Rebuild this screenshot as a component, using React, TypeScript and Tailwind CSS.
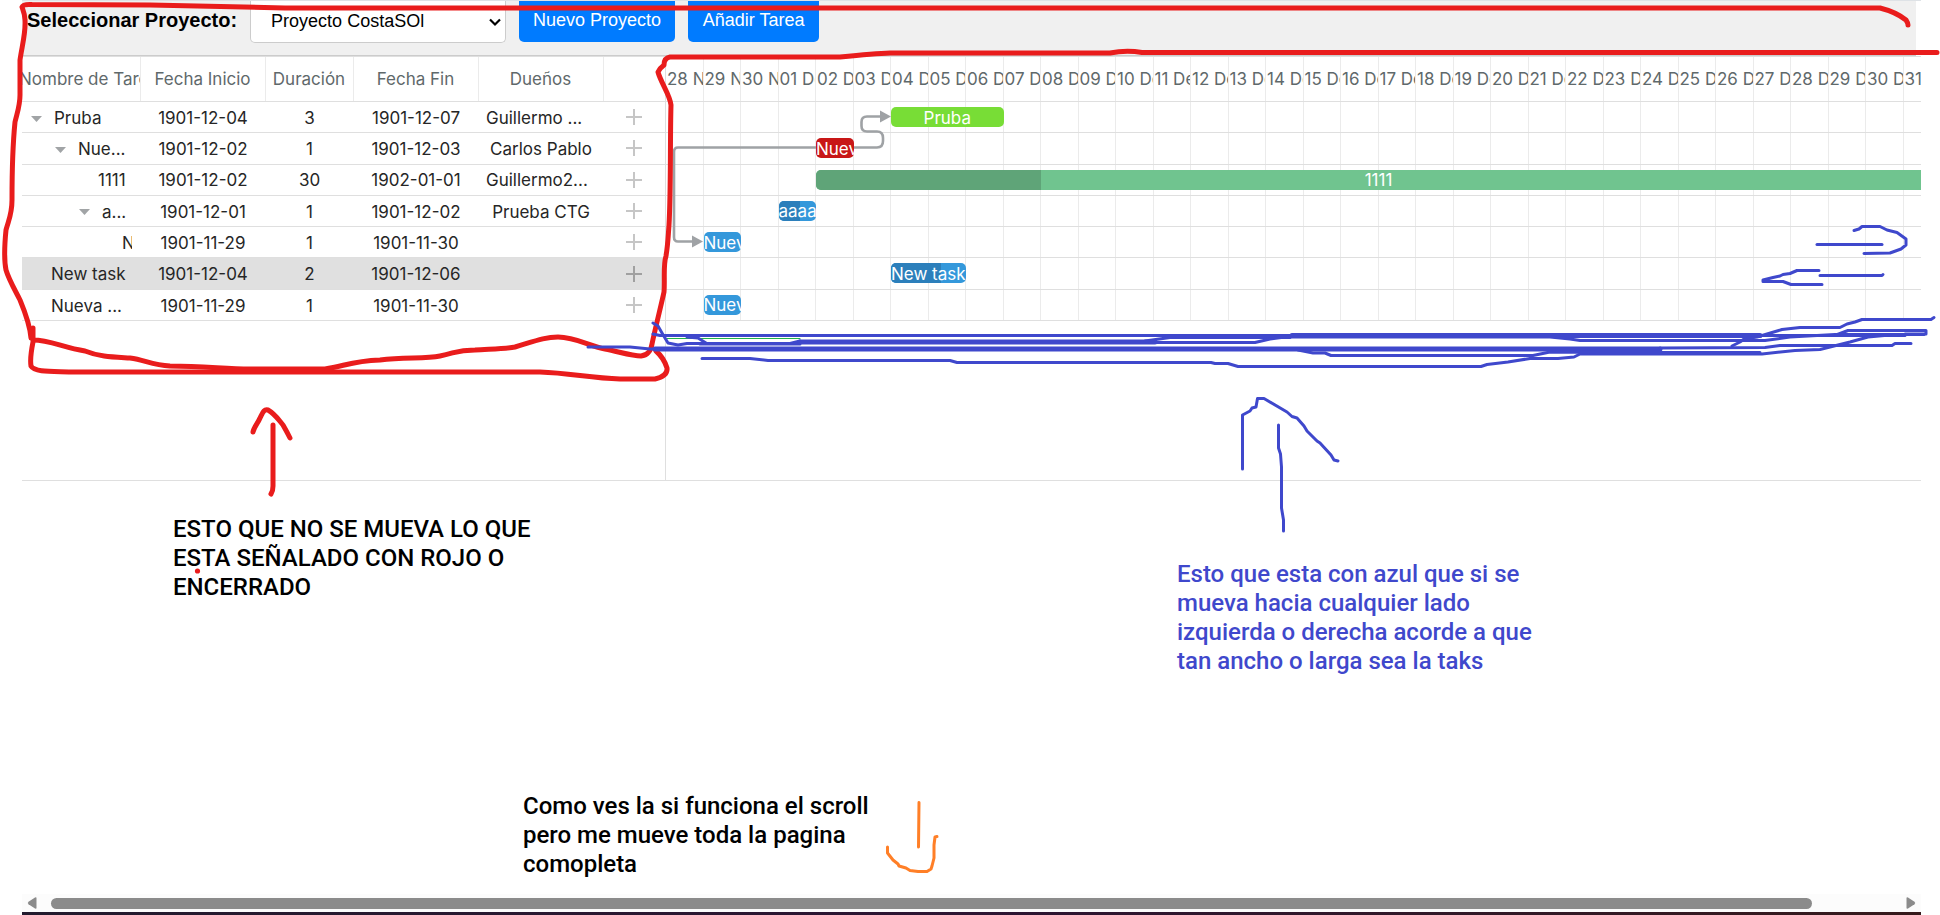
type Row = {
  name: string;
  pad: string;
  arrow?: boolean;
  start: string;
  days: string;
  end: string;
  owner?: string;
  cut?: boolean;
  selected?: boolean;
  bar: { span: string; color: string; label: string; fit?: boolean; done?: string; doneColor?: string };
};

const BLUE = 'bg-[#3498db]';
const BLUE_DONE = 'bg-[#2c7fbb]';

const rows: Row[] = [
  { name: 'Pruba', pad: 'pl-[9px]', arrow: true, start: '1901-12-04', days: '3', end: '1901-12-07', owner: 'Guillermo ...', cut: true,
    bar: { span: 'col-start-7 col-span-3', color: 'bg-[#78dd36]', label: 'Pruba', fit: true } },
  { name: 'Nue...', pad: 'pl-[33px]', arrow: true, start: '1901-12-02', days: '1', end: '1901-12-03', owner: 'Carlos Pablo',
    bar: { span: 'col-start-5 col-span-1', color: 'bg-[#c81717]', label: 'Nueva' } },
  { name: '1111', pad: 'pl-[76px]', start: '1901-12-02', days: '30', end: '1902-01-01', owner: 'Guillermo2...', cut: true,
    bar: { span: 'col-start-5 col-span-30', color: 'bg-[#70c48f]', label: '1111', fit: true, done: 'w-1/5', doneColor: 'bg-[#5fa478]' } },
  { name: 'a...', pad: 'pl-[57px]', arrow: true, start: '1901-12-01', days: '1', end: '1901-12-02', owner: 'Prueba CTG',
    bar: { span: 'col-start-4 col-span-1', color: BLUE, label: 'aaaaa', done: 'w-[57%]', doneColor: BLUE_DONE } },
  { name: 'N', pad: 'pl-[100px]', start: '1901-11-29', days: '1', end: '1901-11-30',
    bar: { span: 'col-start-2 col-span-1', color: BLUE, label: 'Nueva' } },
  { name: 'New task', pad: 'pl-[29px]', start: '1901-12-04', days: '2', end: '1901-12-06', selected: true,
    bar: { span: 'col-start-7 col-span-2', color: BLUE, label: 'New task', done: 'w-[67%]', doneColor: BLUE_DONE } },
  { name: 'Nueva ...', pad: 'pl-[29px]', start: '1901-11-29', days: '1', end: '1901-11-30',
    bar: { span: 'col-start-2 col-span-1', color: BLUE, label: 'Nueva' } },
];

const days = Array.from({ length: 34 }, (_, i) =>
  i < 3 ? `${28 + i} Nov` : `${String(i - 2).padStart(2, '0')} Dec`,
);

const columns = ['Nombre de Tarea', 'Fecha Inicio', 'Duración', 'Fecha Fin', 'Dueños', ''];

const TABLE_COLS = 'grid grid-cols-[119px_125px_88px_125px_125px_61px]';
const DAY_COLS = 'grid grid-cols-[repeat(34,minmax(0,1fr))]';

function Toolbar() {
  return (
    <header className="mr-[5px] flex h-[55px] items-start border-b border-[#cccccc] bg-[#f0f0f0] pl-[5px] font-['Liberation_Sans',sans-serif]">
      <label htmlFor="project" className="flex h-[41px] items-center pb-[3px] text-[20px] font-bold text-black">
        Seleccionar Proyecto:
      </label>
      <div className="relative ml-[13px]">
        <select
          id="project"
          defaultValue="costa"
          className="h-[42px] w-[256px] appearance-none rounded-b-[5px] border border-t-0 border-[#cccccc] bg-white pl-5 text-[18px] text-black"
        >
          <option value="costa">Proyecto CostaSOl</option>
        </select>
        <svg className="pointer-events-none absolute top-[17px] right-[5px]" width="12" height="9" viewBox="0 0 12 9" fill="none" stroke="#000" strokeWidth="2.2">
          <path d="M1 1.5 6 6.5 11 1.5" />
        </svg>
      </div>
      <button type="button" className="ml-[13px] h-[41px] w-[156px] rounded-b-[5px] bg-[#007bff] pb-[3px] text-[18px] text-white">
        Nuevo Proyecto
      </button>
      <button type="button" className="ml-[13px] h-[41px] w-[131px] rounded-b-[5px] bg-[#007bff] pb-[3px] text-[18px] text-white">
        Añadir Tarea
      </button>
    </header>
  );
}

function TaskTable() {
  return (
    <table className="block w-[643px] shrink-0 text-[17px] text-[#262626]">
      <thead className="block">
        <tr className={`${TABLE_COLS} h-[45px] border-b border-[#dfdfdf] text-[#5f696b]`}>
          {columns.map((c, i) => (
            <th
              key={i}
              className={`flex items-center overflow-hidden pt-px font-normal whitespace-nowrap ${i === 0 ? '-indent-[3px]' : 'justify-center pr-px'} ${i < 5 ? 'border-r border-[#ebebeb]' : ''}`}
            >
              {c}
            </th>
          ))}
        </tr>
      </thead>
      <tbody className="grid h-[219px] grid-rows-7">
        {rows.map((r, i) => (
          <tr key={i} className={`${TABLE_COLS} border-b border-[#dfdfdf] ${r.selected ? 'bg-[#e0e0e0]' : ''}`}>
            <td className={`flex items-center overflow-hidden pt-[3px] whitespace-nowrap ${r.pad}`}>
              {r.arrow && (
                <svg className="mr-3 shrink-0" width="11" height="6" viewBox="0 0 11 6">
                  <path d="M0 0h11L5.5 6z" fill="#a1a4a6" />
                </svg>
              )}
              <span className={r.name === 'N' ? 'w-[10px] overflow-hidden' : ''}>{r.name}</span>
            </td>
            <td className="flex items-center justify-center pt-[3px] pr-px">{r.start}</td>
            <td className="flex items-center justify-center pt-[3px] pr-px">{r.days}</td>
            <td className="flex items-center justify-center pt-[3px] pr-px">{r.end}</td>
            <td className={`flex items-center pt-[3px] whitespace-nowrap ${r.cut ? 'pl-[7px]' : 'justify-center pr-px'}`}>{r.owner}</td>
            <td className="flex items-center justify-center pr-0.5">
              <button type="button" aria-label="+">
                <svg width="16" height="16" viewBox="0 0 16 16" stroke={r.selected ? '#a0a0a0' : '#c6c6c6'} strokeWidth="2">
                  <path d="M8 0v16M0 8h16" />
                </svg>
              </button>
            </td>
          </tr>
        ))}
      </tbody>
    </table>
  );
}

function Timeline() {
  return (
    <div className="min-w-0 flex-1 overflow-hidden border-l border-[#dfdfdf] text-[17px]">
      <div className="relative w-[1275px]">
        <div className={`${DAY_COLS} h-[45px] border-b border-[#dfdfdf] text-[#5f696b]`}>
          {days.map((d) => (
            <div key={d} className="flex items-center overflow-hidden border-r border-[#ebebeb] pt-px pl-px whitespace-nowrap">
              {d}
            </div>
          ))}
        </div>
        <div className="grid h-[219px] grid-rows-7">
          {rows.map((r, i) => (
            <div key={i} className={`${DAY_COLS} border-b border-[#dfdfdf]`}>
              <div className={`${DAY_COLS} col-span-full col-start-1 row-start-1`}>
                {days.map((d) => (
                  <div key={d} className="border-r border-[#ebebeb]" />
                ))}
              </div>
              <div className={`${r.bar.span} ${r.bar.color} z-10 row-start-1 mt-[5px] grid h-5 min-w-0 grid-rows-[20px] overflow-hidden rounded-[5px]`}>
                {r.bar.done && <div className={`col-start-1 row-start-1 ${r.bar.done} ${r.bar.doneColor}`} />}
                <span
                  className={`col-start-1 row-start-1 flex items-center overflow-hidden pt-0.5 leading-none whitespace-nowrap text-white ${r.bar.fit ? 'justify-center' : ''}`}
                >
                  {r.bar.label}
                </span>
              </div>
            </div>
          ))}
        </div>
        <svg className="pointer-events-none absolute top-0 left-0" width="250" height="220" viewBox="0 0 250 220" fill="none" stroke="#9fa2a5" strokeWidth="2.6">
          <path d="M188 90.500H211Q217 90.500 217 84V81Q217 74.500 211 74.500H201Q195.500 74.500 195.500 69V65Q195.500 59.500 201 59.500H214" />
          <path d="M214 53.500 225 59.500 214 65.500z" fill="#9fa2a5" stroke="none" />
          <path d="M150 90.500H12Q8 90.500 8 95V180Q8 184.500 12 184.500H27" />
          <path d="M26 178.500 37 184.500 26 190.500z" fill="#9fa2a5" stroke="none" />
        </svg>
      </div>
    </div>
  );
}

function PageScrollbar() {
  return (
    <div className="flex h-[18px] items-center bg-[#fcfcfc] px-[5px]" aria-hidden="true">
      <svg width="10" height="12" viewBox="0 0 10 12">
        <path d="M9.500 1v10q0 1-1.500.5L1.500 7.200Q0 6 1.500 4.800L8 .5q1.500-.5 1.500.5z" fill="#8b8b8b" />
      </svg>
      <div className="mx-[14px] flex-1">
        <div className="h-[11px] w-22/23 rounded-full bg-[#8b8b8b]" />
      </div>
      <svg width="10" height="12" viewBox="0 0 10 12">
        <path d="M.5 1v10q0 1 1.500.5L8.500 7.200Q10 6 8.500 4.800L2 .5Q.5 0 .5 1z" fill="#8b8b8b" />
      </svg>
    </div>
  );
}

function PenStrokes() {
  return (
    <svg className="pointer-events-none absolute top-0 left-0 z-20" width="1940" height="915" viewBox="0 0 1940 915" fill="none" strokeLinecap="round" strokeLinejoin="round">
      <path d="M667 338.500H800" stroke="#22b14c" strokeWidth="1" />
      <g stroke="#e91c1c" strokeWidth="5">
        <path d="M31 338C30 326 25 312 20 300C15 290 9 280 6 270C4 260 5 240 6 230C9 219 12 214 12 200C12 172 13 142 15 122C18 110 20 105 20 95V60C22 46 26 32 25 20C25 14 23 10 22 7Q23 4 32 4.500L150 5L285 8H1880Q1896 12 1906 20Q1908 23 1908 25" />
        <path d="M33 328V340C50 340 64 348 85 351C100 357 112 357 130 358C145 360 152 365 170 366C205 366 225 369 250 369H325C345 366 352 361 380 360C405 357 425 359 440 356C458 352 458 350 475 350C490 349 505 349 515 347C535 341 545 337 558 337C575 337 590 346 605 349C620 352 632 356 641 356C649 355 651 350 652 344C656 325 661 306 664 292C665 280 663 265 666 256C668 244 668 238 669 225C671 190 670 140 671 105C670 95 661 83 658 72Q660 68 664 65Q664 58 670 57H840C860 55 875 53.500 890 53H1110Q1126 50 1142 52.500H1937" />
        <path d="M33 342C31 352 30 360 31 366C35 373 55 371 75 372H540C570 373 590 378 620 379H655Q668 376 667 368Q664 358 656 351" />
        <path d="M253 432C254 427 258 423 260 418C263 412 264 409 268 410C275 414 278 419 283 425C287 432 288 434 290 438" />
        <path d="M273 425V486Q273 491 271 494" />
      </g>
      <circle cx="197.500" cy="571" r="2.600" fill="#e91c1c" />
      <g stroke="#3f48cc" strokeWidth="3">
        <path d="M653 323L658 326L662 333L668 343L678 345L687 343.500H790L800 341" />
        <path d="M653 334L660 335.500H1905" />
        <path d="M687 337L698 338L706 343" />
        <path d="M1292 335.500H1760" strokeWidth="5" />
        <path d="M588 347H630L650 349H700" />
        <path d="M655 349H1660" strokeWidth="5" />
        <path d="M700 344H800" />
        <path d="M800 342H1155" strokeWidth="5" />
        <path d="M1145 341L1170 337.500H1290" />
        <path d="M1150 342.500H1255L1270 339L1285 337H1550L1570 339L1580 340.500H1765L1790 337L1835 334.500H1924" />
        <path d="M1660 348L1765 347.500L1780 345.500H1892L1895 343.500H1911" />
        <path d="M702 358.500H750L768 360.500H950L957 362.500H1211L1215 363.500H1228L1238 366.500H1481L1487 364.500L1508 362L1530 358.500H1558L1574 357L1580 354H1762L1795 350.500L1820 349.500L1850 342L1868 337L1890 335" />
        <path d="M1298 350L1313 353H1325L1331 355.500H1533L1550 352L1600 352.500H1760" />
        <path d="M1732 346L1740 342L1744 339L1757 337L1782 329.500L1800 327.500H1840L1847 324L1855 322L1862 319.500H1931L1934 317.500" />
        <path d="M1836 335L1848 330.500H1926V334H1905" />
        <path d="M1854 230.500L1859 229L1862 226.500H1880L1887 230L1897 232.500L1906 239V245L1901 249L1890 253L1864 253.500" />
        <path d="M1817 244.500H1882" />
        <path d="M1819 270.500H1797L1790 273.500L1783 274.500L1780 276L1773 277.500L1763 280V281.500H1783L1791 284.500H1822" />
        <path d="M1820 275.500H1882L1883 274.500" />
        <path d="M1242.500 469V415L1250 411L1252 408L1256 407L1257.500 398.500H1264L1287 412L1292 416.500L1297 418L1304 426L1307 431L1317 441L1320 443L1331 455L1334 460L1338 461" />
        <path d="M1278.500 425V448L1280.500 454L1281.500 467V508L1283.500 520V531" />
      </g>
      <g stroke="#ff7f27" strokeWidth="3">
        <path d="M919 802.500L918.500 847" />
        <path d="M887.500 847V853L893 860L898 864L899 866L906 868L910 870.500L918 871.500H927L931 869L932 866L934 858V845L935 837L937 836.500" />
      </g>
    </svg>
  );
}

const NOTE = "absolute z-20 font-['Roboto',sans-serif] text-[24px] leading-[29px] font-medium whitespace-nowrap";

export default function App() {
  return (
    <div className="relative flex min-h-screen flex-col overflow-hidden bg-white pr-[19px] pl-[22px] font-['Inter',sans-serif]">
      <div className="h-px bg-[#dee2e6]" />
      <Toolbar />
      <main className="flex h-[425px] border-y border-[#dfdfdf]">
        <TaskTable />
        <Timeline />
      </main>
      <p className={`${NOTE} top-[515px] left-[173px] text-black`}>
        ESTO QUE NO SE MUEVA LO QUE<br />ESTA SEÑALADO CON ROJO O<br />ENCERRADO
      </p>
      <p className={`${NOTE} top-[560px] left-[1177px] text-[#3f48cc]`}>
        Esto que esta con azul que si se<br />mueva hacia cualquier lado<br />izquierda o derecha acorde a que<br />tan ancho o larga sea la taks
      </p>
      <p className={`${NOTE} top-[792px] left-[523px] text-black`}>
        Como ves la si funciona el scroll<br />pero me mueve toda la pagina<br />comopleta
      </p>
      <div className="mt-auto">
        <PageScrollbar />
        <div className="h-[3px] bg-linear-to-r from-[#231b2e] via-[#2d1533] to-[#361a1c]" />
      </div>
      <PenStrokes />
    </div>
  );
}
